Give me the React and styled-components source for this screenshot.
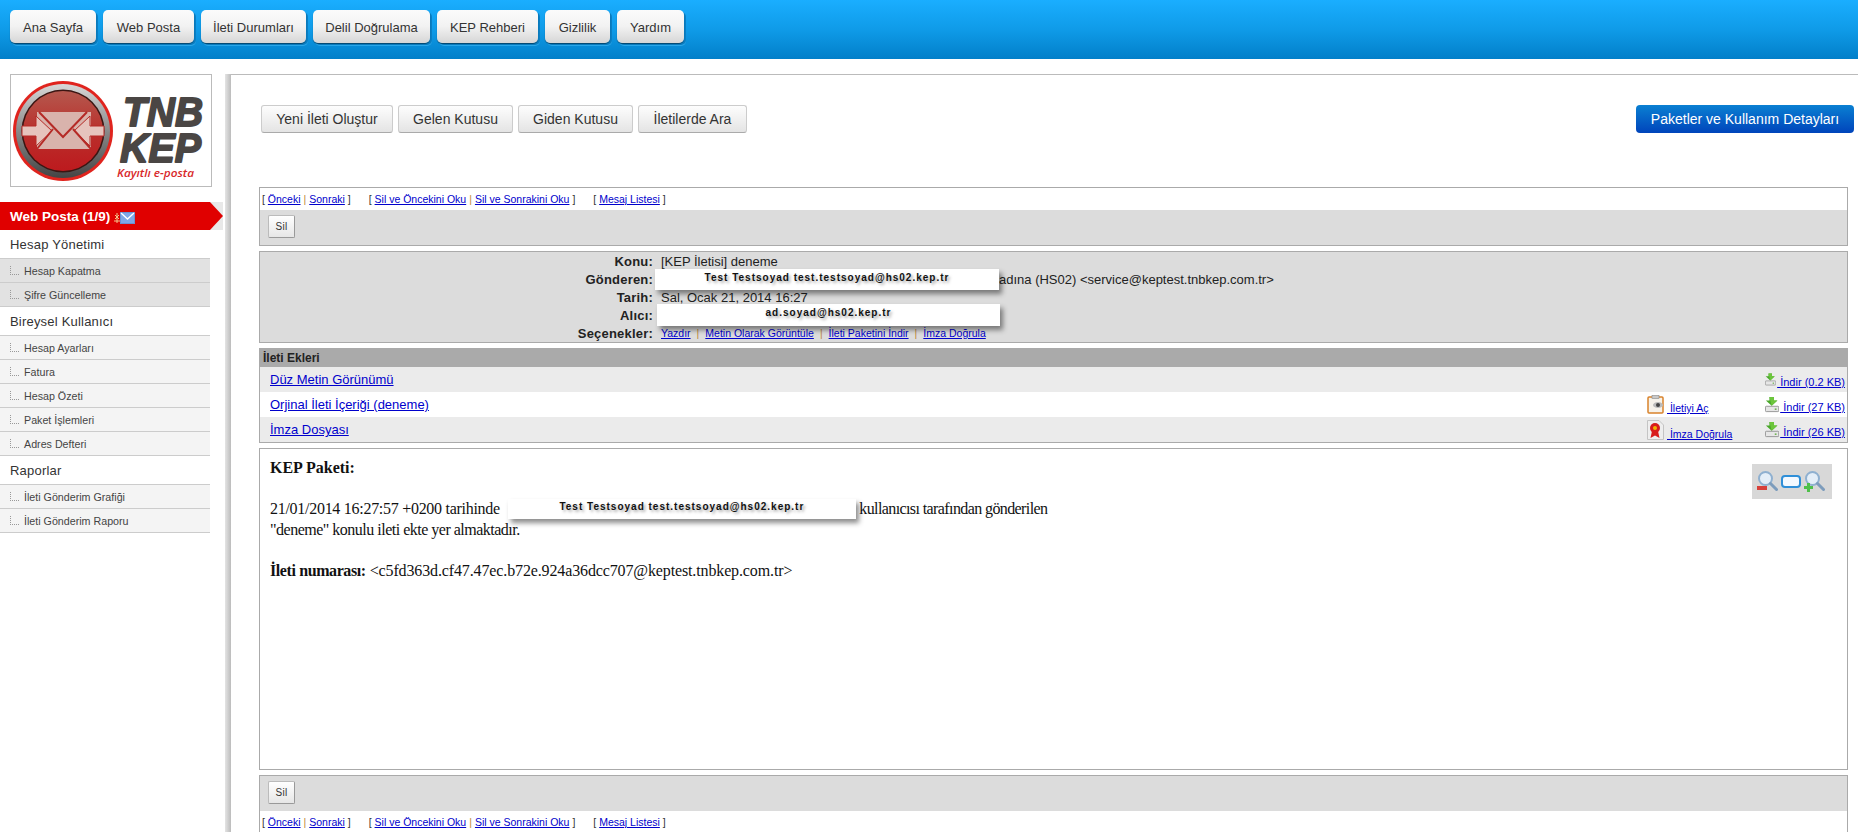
import React from 'react';
import styled, { createGlobalStyle } from 'styled-components';

const GlobalStyle = createGlobalStyle`
  html, body {
    margin: 0;
    padding: 0;
    height: 832px;
    overflow: hidden;
    background: #fff;
    font-family: "Liberation Sans", Arial, sans-serif;
  }
`;

const TopBar = styled.header`
  height: 59px;
  box-sizing: border-box;
  padding: 10px 0 0 10px;
  display: flex;
  gap: 7px;
  background: linear-gradient(to bottom, #1aaeff 0%, #0f9be8 50%, #027fc9 100%);
`;

const TopButton = styled.a`
  height: 33px;
  width: ${p => p.$w}px;
  box-sizing: border-box;
  display: flex;
  align-items: center;
  justify-content: center;
  padding-top: 2px;
  font-size: 13px;
  color: #333;
  border-radius: 5px;
  background: linear-gradient(to bottom, #fbfbfb 0%, #f2f2f2 50%, #d6d6d6 100%);
  box-shadow: 0 1px 1px rgba(0, 0, 0, 0.45), 2px 2px 0 #0a7fc4, 2px 3px 0 #2aa6e8;
`;

const Layout = styled.div`
  display: flex;
  padding-top: 15px;
  height: 758px;
`;

const Sidebar = styled.aside`
  width: 225px;
  flex: none;
`;

const Separator = styled.div`
  width: 6px;
  flex: none;
  background: linear-gradient(to right, #e4e4e4, #bcbcbc);
`;

const LogoBox = styled.div`
  width: 202px;
  height: 113px;
  margin-left: 10px;
  box-sizing: border-box;
  border: 1px solid #bbb;
  background: #fff;
`;

const MenuHead = styled.div`
  position: relative;
  margin-top: 15px;
  width: 223px;
  height: 28px;
  background: #e8e8e8;
`;

const MenuHeadRed = styled.div`
  height: 28px;
  box-sizing: border-box;
  padding-left: 10px;
  display: flex;
  align-items: center;
  gap: 4px;
  font-size: 13.5px;
  font-weight: bold;
  color: #fff;
  background: #e00000;
  clip-path: polygon(0 0, 210px 0, 223px 14px, 210px 28px, 0 28px);

  svg { margin-top: 3px; }
`;

const SectionTitle = styled.div`
  width: 210px;
  height: 29px;
  box-sizing: border-box;
  padding-left: 10px;
  display: flex;
  align-items: center;
  font-size: 13px;
  letter-spacing: 0.2px;
  color: #333;
  border-bottom: 1px solid #ccc;
`;

const MenuItem = styled.div`
  width: 210px;
  height: 24px;
  box-sizing: border-box;
  padding-left: 24px;
  position: relative;
  display: flex;
  align-items: center;
  font-size: 10.7px;
  color: #444;
  background: ${p => (p.$active ? '#e2e2e2' : '#f4f4f4')};
  border-bottom: 1px solid #ccc;

  &::before {
    content: '';
    position: absolute;
    left: 10px;
    top: 7px;
    width: 8px;
    height: 8px;
    border-left: 1px dotted #999;
    border-bottom: 1px dotted #999;
  }
`;

const Main = styled.main`
  flex: 1;
  min-width: 0;
  box-sizing: border-box;
  padding: 30px 10px 0 28px;
  border-top: 1px solid #bbb;
`;

const Toolbar = styled.div`
  display: flex;
  gap: 5px;
  height: 28px;
  padding-left: 2px;
  margin-right: -6px;
  margin-bottom: 54px;
`;

const ToolButton = styled.a`
  width: ${p => p.$w}px;
  box-sizing: border-box;
  display: flex;
  align-items: center;
  justify-content: center;
  font-size: 14px;
  color: #333;
  border: 1px solid #ccc;
  border-bottom-color: #aaa;
  border-radius: 3px;
  background: linear-gradient(to bottom, #fdfdfd, #e4e4e4);
`;

const PackageButton = styled.a`
  margin-left: auto;
  width: 218px;
  display: flex;
  align-items: center;
  justify-content: center;
  font-size: 14px;
  color: #fff;
  border-radius: 4px;
  background: linear-gradient(to bottom, #0a80d2, #0044bb);
`;

const Panel = styled.section`
  box-sizing: border-box;
  border: 1px solid #aaa;
  margin-bottom: 5px;
  background: ${p => p.$bg || '#fff'};
`;

const BottomPanel = styled(Panel)`
  border-bottom: 0;
  margin-bottom: 0;
`;

const LinkRow = styled.div`
  height: ${p => p.$h}px;
  box-sizing: border-box;
  padding-left: 2px;
  display: flex;
  align-items: center;
  gap: 18px;
  font-size: 10.5px;
  color: #333;
  background: #fff;
`;

const Link = styled.a`
  color: #0000cc;
  text-decoration: underline;
`;

const Pipe = styled.span`
  color: #c08a3c;
  margin: 0 ${p => p.$m || 3}px;
`;

const ActionRow = styled.div`
  height: ${p => p.$h}px;
  box-sizing: border-box;
  padding: ${p => p.$top}px 0 0 8px;
  background: #dcdcdc;
`;

const SilButton = styled.button`
  width: 27px;
  height: 23px;
  padding: 0;
  font-family: inherit;
  font-size: 10px;
  letter-spacing: 0.3px;
  color: #333;
  border: 1px solid #bbb;
  border-bottom-color: #999;
  border-right-color: #999;
  border-radius: 2px;
  background: linear-gradient(to bottom, #fff, #e6e6e6);
`;

const HeaderGrid = styled.div`
  height: 90px;
  display: grid;
  grid-template-columns: 393px 1fr;
  grid-auto-rows: 18px;
  column-gap: 8px;
  align-items: center;
  font-size: 13px;
  color: #222;
`;

const Label = styled.div`
  font-weight: bold;
  text-align: right;
  letter-spacing: 0.2px;
`;

const Value = styled.div`
  display: flex;
  align-items: center;
  white-space: nowrap;
`;

const Redact = styled.span`
  position: relative;
  z-index: 1;
  flex: none;
  display: inline-block;
  box-sizing: border-box;
  width: ${p => p.$w}px;
  height: ${p => p.$h}px;
  margin-left: ${p => p.$ml || 0}px;
  line-height: ${p => p.$h - 4}px;
  text-align: center;
  font-family: "Liberation Sans", Arial, sans-serif;
  font-size: 10px;
  font-weight: bold;
  letter-spacing: 1px;
  color: #111;
  background: #fff;
  box-shadow: 3px 4px 5px rgba(0, 0, 0, 0.45);
  text-shadow: 2px 2px 3px rgba(0, 0, 0, 0.35);
`;

const OptionLinks = styled.div`
  display: flex;
  align-items: center;
  font-size: 10.5px;
`;

const AttachHead = styled.div`
  height: 18px;
  box-sizing: border-box;
  padding-left: 3px;
  display: flex;
  align-items: center;
  font-size: 12px;
  font-weight: bold;
  color: #222;
  background: #aaa;
`;

const AttachRow = styled.div`
  height: 25px;
  box-sizing: border-box;
  padding: 0 2px 0 10px;
  display: grid;
  grid-template-columns: 1fr 118px 80px;
  align-items: center;
  font-size: 13px;
  background: ${p => (p.$even ? '#fff' : '#ebebeb')};
`;

const SmallAction = styled.div`
  display: flex;
  align-items: flex-end;
  font-size: ${p => (p.$right ? 11 : 10.5)}px;
  gap: ${p => p.$gap ?? 3}px;
  justify-content: ${p => (p.$right ? 'flex-end' : 'flex-start')};
  white-space: nowrap;
`;

const MessageBody = styled(Panel)`
  position: relative;
  height: 322px;
  padding: 9px 0 0 10px;
  font-family: "Liberation Serif", "Times New Roman", serif;
  font-size: 16px;
  line-height: 20.5px;
  color: #111;
`;

const MessageLine = styled.div`
  display: flex;
  align-items: center;
  height: 20.5px;
  margin-top: ${p => p.$gap || 0}px;
  white-space: pre;
`;

const Tight = styled.span`
  letter-spacing: ${p => p.$ls}px;
`;

const TightBold = styled(Tight)`
  font-weight: bold;
`;

const ZoomBox = styled.div`
  position: absolute;
  top: 15px;
  right: 15px;
  width: 80px;
  height: 35px;
  box-sizing: border-box;
  padding: 0 7px 0 5px;
  display: flex;
  align-items: center;
  justify-content: space-between;
  background: #d8d8d8;
`;

const Logo = () => (
  <svg width="200" height="111" viewBox="0 0 200 111">
    <defs>
      <linearGradient id="ring" x1="0" y1="0" x2="0" y2="1">
        <stop offset="0" stopColor="#d8d8d8" />
        <stop offset="0.5" stopColor="#8a8a8a" />
        <stop offset="1" stopColor="#444" />
      </linearGradient>
      <linearGradient id="disc" x1="0" y1="0" x2="0" y2="1">
        <stop offset="0" stopColor="#b5584e" />
        <stop offset="0.5" stopColor="#b9302c" />
        <stop offset="1" stopColor="#bd1a1e" />
      </linearGradient>
    </defs>
    <circle cx="52" cy="56" r="50" fill="#e0241e" />
    <circle cx="52" cy="56" r="47" fill="url(#ring)" />
    <circle cx="52" cy="56" r="41.5" fill="#3a1512" />
    <circle cx="52" cy="56" r="40" fill="url(#disc)" />
    <polygon points="26,37 80,37 80,74 26,74" fill="#d9b3ac" />
    <path d="M11 51 H25 V41 L41 56 L25 71 V61 H11 Z" fill="#e6c4bd" stroke="#b52a26" strokeWidth="1" />
    <path d="M93 51 H79 V41 L63 56 L79 71 V61 H93 Z" fill="#e6c4bd" stroke="#b52a26" strokeWidth="1" />
    <path d="M28 37 L52 62 L76 37" fill="none" stroke="#b52a26" strokeWidth="2" />
    <path d="M26 74 L42 54 M80 74 L62 54" fill="none" stroke="#b52a26" strokeWidth="2" />
    <text x="112" y="51" fontFamily="'Liberation Sans', sans-serif" fontSize="41" fontWeight="700"
      fontStyle="italic" fill="#4a4644" stroke="#4a4644" strokeWidth="1.800" strokeLinejoin="round" textLength="80" lengthAdjust="spacingAndGlyphs">TNB</text>
    <text x="109" y="87" fontFamily="'Liberation Sans', sans-serif" fontSize="41" fontWeight="700"
      fontStyle="italic" fill="#4a4644" stroke="#4a4644" strokeWidth="1.800" strokeLinejoin="round" textLength="81" lengthAdjust="spacingAndGlyphs">KEP</text>
    <text x="106" y="102" fontFamily="'Open Sans', 'Liberation Sans', sans-serif" fontSize="11.500" fontWeight="600"
      fontStyle="italic" fill="#d8282a" textLength="77" lengthAdjust="spacingAndGlyphs">Kayıtlı e-posta</text>
  </svg>
);

const MailSpark = () => (
  <svg width="21" height="12" viewBox="0 0 21 12">
    <path d="M1 3 L5 7 M5 3 L1 7 M0 9 H6 M3 1 V11" stroke="#f3c58a" strokeWidth="1" />
    <rect x="6.500" y="0.500" width="14" height="11" fill="#7ea6e6" stroke="#6a90d0" />
    <path d="M7 1 L13.500 7 L20 1" fill="none" stroke="#fff" strokeWidth="1.300" />
  </svg>
);

const DownloadIcon = () => (
  <svg width="16" height="17" viewBox="0 0 16 17">
    <path d="M5 0 H10 V4 H14 L7.500 10 L1 4 H5 Z" fill="#4aa82a" />
    <path d="M5 0 H10 V4 H14 L7.500 10 Z" fill="#6cc63c" />
    <rect x="0.500" y="10.500" width="15" height="6" rx="1" fill="#e6e6e6" stroke="#8e8e8e" />
    <rect x="11" y="13" width="2" height="1.500" fill="#5aa83a" />
  </svg>
);

const ViewIcon = () => (
  <svg width="17" height="19" viewBox="0 0 17 19">
    <rect x="1" y="2" width="15" height="16" rx="1" fill="#f6f2ea" stroke="#d9822b" strokeWidth="1.500" />
    <rect x="5" y="0.500" width="7" height="3" fill="#c9c9c9" stroke="#888" strokeWidth="0.600" />
    <ellipse cx="11" cy="10" rx="5" ry="3" fill="#bbb" />
    <circle cx="11" cy="10" r="2" fill="#444" />
  </svg>
);

const SealIcon = () => (
  <svg width="17" height="20" viewBox="0 0 17 20">
    <path d="M0.500 0.500 H12 L16.500 5 V19.500 H0.500 Z" fill="#eee" stroke="#c4c4c4" />
    <path d="M5 11 L3.500 18 L8 15.500 L12.500 18 L11 11 Z" fill="#d81c1c" />
    <circle cx="8" cy="8" r="5" fill="#d81c1c" />
    <circle cx="8" cy="8" r="2" fill="#f0b400" />
  </svg>
);

const Magnifier = ({ plus }) => (
  <svg width="21" height="21" viewBox="0 0 21 21">
    <circle cx="8.500" cy="7.500" r="6.500" fill="#e4eef8" stroke="#8fb0d0" strokeWidth="2" />
    <path d="M13.500 12.500 L19.500 18.500" stroke="#7d9cbc" strokeWidth="3" strokeLinecap="round" />
    {plus ? (
      <path d="M3 12 H6 V15 H9 V18 H6 V21 H3 V18 H0 V15 H3 Z" fill="#4fc04a" />
    ) : (
      <rect x="0" y="15" width="10" height="4" fill="#d8403a" />
    )}
  </svg>
);

const FitIcon = () => (
  <svg width="20" height="13" viewBox="0 0 20 13">
    <rect x="1" y="1" width="18" height="11" rx="3" fill="#f4f9ff" stroke="#2f8fd8" strokeWidth="2" />
  </svg>
);

const topMenu = [
  ['Ana Sayfa', 86], ['Web Posta', 91], ['İleti Durumları', 105], ['Delil Doğrulama', 117],
  ['KEP Rehberi', 101], ['Gizlilik', 65], ['Yardım', 67],
];

const sideMenu = [
  { title: 'Hesap Yönetimi', active: true, items: ['Hesap Kapatma', 'Şifre Güncelleme'] },
  { title: 'Bireysel Kullanıcı', items: ['Hesap Ayarları', 'Fatura', 'Hesap Özeti', 'Paket İşlemleri', 'Adres Defteri'] },
  { title: 'Raporlar', items: ['İleti Gönderim Grafiği', 'İleti Gönderim Raporu'] },
];

const MessageLinks = ({ h }) => (
  <LinkRow $h={h}>
    <span>[ <Link>Önceki</Link><Pipe>|</Pipe><Link>Sonraki</Link> ]</span>
    <span>[ <Link>Sil ve Öncekini Oku</Link><Pipe>|</Pipe><Link>Sil ve Sonrakini Oku</Link> ]</span>
    <span>[ <Link>Mesaj Listesi</Link> ]</span>
  </LinkRow>
);

export default function App() {
  return (
    <>
      <GlobalStyle />
      <TopBar>
        {topMenu.map(([label, w]) => <TopButton key={label} $w={w}>{label}</TopButton>)}
      </TopBar>
      <Layout>
        <Sidebar>
          <LogoBox><Logo /></LogoBox>
          <MenuHead>
            <MenuHeadRed>Web Posta (1/9) <MailSpark /></MenuHeadRed>
          </MenuHead>
          {sideMenu.map(group => (
            <div key={group.title}>
              <SectionTitle>{group.title}</SectionTitle>
              {group.items.map(item => <MenuItem key={item} $active={group.active}>{item}</MenuItem>)}
            </div>
          ))}
        </Sidebar>
        <Separator />
        <Main>
          <Toolbar>
            <ToolButton $w={132}>Yeni İleti Oluştur</ToolButton>
            <ToolButton $w={115}>Gelen Kutusu</ToolButton>
            <ToolButton $w={115}>Giden Kutusu</ToolButton>
            <ToolButton $w={109}>İletilerde Ara</ToolButton>
            <PackageButton>Paketler ve Kullanım Detayları</PackageButton>
          </Toolbar>

          <Panel>
            <MessageLinks h={22} />
            <ActionRow $h={35} $top={5}><SilButton>Sil</SilButton></ActionRow>
          </Panel>

          <Panel $bg="#dcdcdc">
            <HeaderGrid>
              <Label>Konu:</Label>
              <Value>[KEP İletisi] deneme</Value>
              <Label>Gönderen:</Label>
              <Value>
                <Redact $w={344} $h={21} $ml={-6}>Test Testsoyad test.testsoyad@hs02.kep.tr</Redact>
                adına (HS02) &lt;service@keptest.tnbkep.com.tr&gt;
              </Value>
              <Label>Tarih:</Label>
              <Value>Sal, Ocak 21, 2014 16:27</Value>
              <Label>Alıcı:</Label>
              <Value><Redact $w={343} $h={22} $ml={-4}>ad.soyad@hs02.kep.tr</Redact></Value>
              <Label>Seçenekler:</Label>
              <OptionLinks>
                <Link>Yazdır</Link><Pipe $m={6}>|</Pipe>
                <Link>Metin Olarak Görüntüle</Link><Pipe $m={6}>|</Pipe>
                <Link>İleti Paketini İndir</Link><Pipe $m={6}>|</Pipe>
                <Link>İmza Doğrula</Link>
              </OptionLinks>
            </HeaderGrid>
          </Panel>

          <Panel>
            <AttachHead>İleti Ekleri</AttachHead>
            <AttachRow>
              <Link>Düz Metin Görünümü</Link>
              <span />
              <SmallAction $right $gap={1}><DownloadIcon /><Link>&nbsp;İndir (0.2 KB)</Link></SmallAction>
            </AttachRow>
            <AttachRow $even>
              <Link>Orjinal İleti İçeriği (deneme)</Link>
              <SmallAction><ViewIcon /><Link>&nbsp;İletiyi Aç</Link></SmallAction>
              <SmallAction $right $gap={1}><DownloadIcon /><Link>&nbsp;İndir (27 KB)</Link></SmallAction>
            </AttachRow>
            <AttachRow>
              <Link>İmza Dosyası</Link>
              <SmallAction><SealIcon /><Link>&nbsp;İmza Doğrula</Link></SmallAction>
              <SmallAction $right $gap={1}><DownloadIcon /><Link>&nbsp;İndir (26 KB)</Link></SmallAction>
            </AttachRow>
          </Panel>

          <MessageBody>
            <ZoomBox><Magnifier /><FitIcon /><Magnifier plus /></ZoomBox>
            <MessageLine><b>KEP Paketi:</b></MessageLine>
            <MessageLine $gap={20.5}>
              <Tight $ls={-0.28}>21/01/2014 16:27:57 +0200 tarihinde</Tight>
              <Redact $w={348} $h={20} $ml={8}>Test Testsoyad test.testsoyad@hs02.kep.tr</Redact>
              <Tight $ls={-0.6}>{' '}kullanıcısı tarafından gönderilen</Tight>
            </MessageLine>
            <MessageLine><Tight $ls={-0.5}>"deneme" konulu ileti ekte yer almaktadır.</Tight></MessageLine>
            <MessageLine $gap={20.5}>
              <TightBold $ls={-0.4}>İleti numarası:</TightBold>
              <Tight $ls={-0.13}> &lt;c5fd363d.cf47.47ec.b72e.924a36dcc707@keptest.tnbkep.com.tr&gt;</Tight>
            </MessageLine>
          </MessageBody>

          <BottomPanel>
            <ActionRow $h={35} $top={5}><SilButton>Sil</SilButton></ActionRow>
            <MessageLinks h={22} />
          </BottomPanel>
        </Main>
      </Layout>
    </>
  );
}
